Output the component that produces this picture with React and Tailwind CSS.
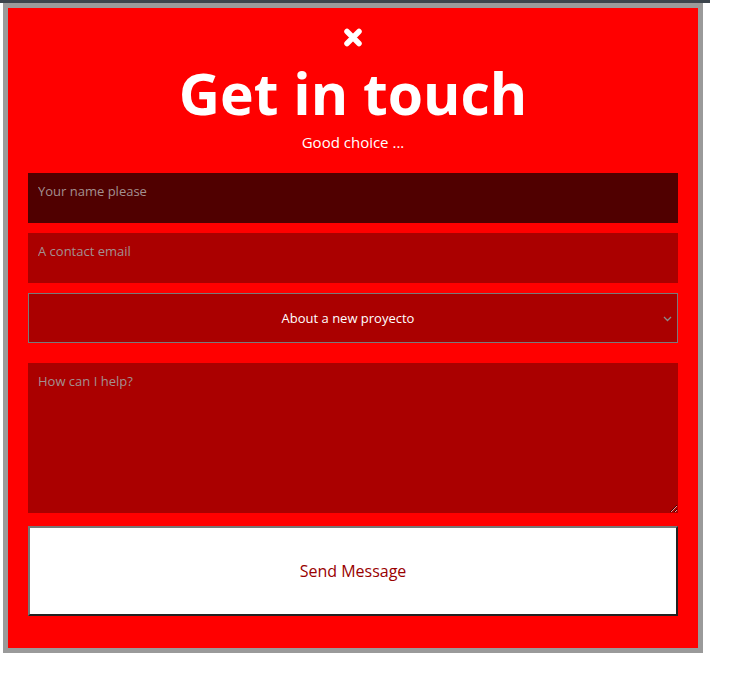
import { useState } from 'react'

// Contact panel: red card inside a grey frame, stacked form fields.
const field =
  'block w-full px-[10px] text-[13px] text-white outline-none placeholder:text-[#a39090]'

function CloseMark() {
  return (
    <svg width="20" height="19" viewBox="0 0 20 19" className="mx-auto block">
      <path d="M4 3.5 L16 15.5 M16 3.5 L4 15.5" stroke="#fff" strokeWidth="5.5" strokeLinecap="round" />
    </svg>
  )
}

export default function App() {
  const [topic, setTopic] = useState('new')

  return (
    <div className="min-h-screen bg-white font-['Open_Sans','Noto_Sans',sans-serif]">
      <div className="h-[3px] w-[710px] bg-[#3c444c]" />
      <div className="ml-[3px] w-[700px] bg-[#9a9a9a] p-[5px]">
        <div className="bg-[#ff0000] px-5 pt-5 pb-[32px]">
          <CloseMark />
          <h1 className="mt-[14px] text-center text-[57px] font-bold leading-[64px] text-white">Get in touch</h1>
          <p className="mt-[7px] text-center text-[15px] leading-[20px] text-white">Good choice ...</p>

          <form className="mt-[21px]" onSubmit={(e) => e.preventDefault()}>
            <input
              type="text"
              placeholder="Your name please"
              className={`${field} h-[50px] bg-[#500000] pt-[8px] pb-[22px]`}
            />
            <input
              type="email"
              placeholder="A contact email"
              className={`${field} mt-[10px] h-[50px] bg-[#aa0000] pt-[8px] pb-[22px]`}
            />
            <div className="relative mt-[10px]">
              <select
                value={topic}
                onChange={(e) => setTopic(e.target.value)}
                className="block h-[50px] w-full appearance-none border border-[#7a7a7a] bg-[#aa0000] pt-[2px] pr-[10px] text-[13px] text-white outline-none [text-align-last:center]"
              >
                <option value="new">About a new proyecto</option>
                <option value="other">Something else</option>
              </select>
              <svg width="9" height="6" viewBox="0 0 9 6" className="pointer-events-none absolute right-[6px] top-[23px]">
                <path d="M1 1 L4.5 4.5 L8 1" stroke="#8a8a8a" strokeWidth="1.3" fill="none" />
              </svg>
            </div>
            <textarea
              placeholder="How can I help?"
              className={`${field} mt-5 h-[150px] bg-[#aa0000] pt-[8px] pb-[10px] leading-[20px]`}
            />
            <button
              type="submit"
              className="mt-[13px] block h-[90px] w-full border-2 border-t-[#777] border-l-[#777] border-r-[#222] border-b-[#222] bg-white text-[16px] text-[#990000]"
            >
              Send Message
            </button>
          </form>
        </div>
      </div>
    </div>
  )
}
